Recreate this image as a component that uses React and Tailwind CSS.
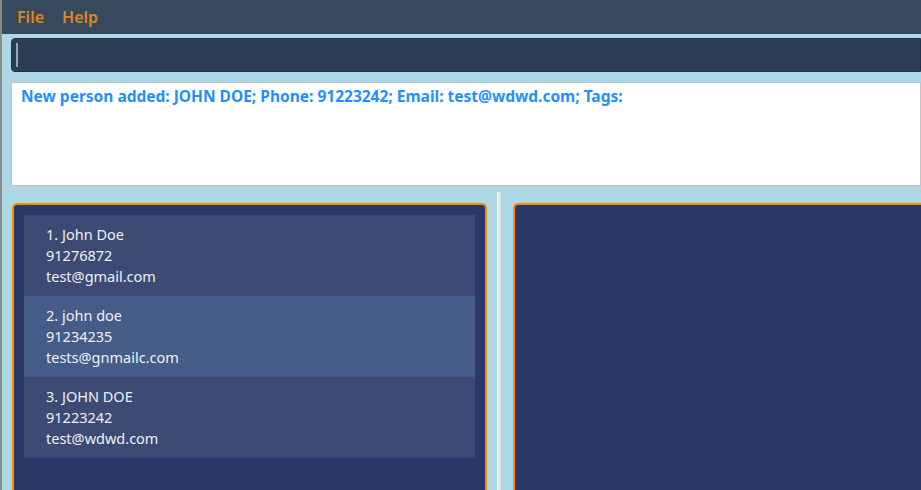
import { useState } from 'react';

const persons = [
  { name: 'John Doe', phone: '91276872', email: 'test@gmail.com' },
  { name: 'john doe', phone: '91234235', email: 'tests@gnmailc.com' },
  { name: 'JOHN DOE', phone: '91223242', email: 'test@wdwd.com' },
];

const font = { fontFamily: '"Noto Sans", "Open Sans", sans-serif' };

export default function App() {
  const [selected] = useState(1);

  return (
    <div className="flex h-[490px] w-[921px] overflow-hidden bg-[#add8e6]" style={font}>
      {/* window edge */}
      <div className="w-[2px] shrink-0 bg-[#8a8a8a]" />

      <div className="flex min-w-0 flex-1 flex-col">
        {/* Menu bar */}
        <div className="flex h-[34px] shrink-0 items-center gap-[18px] bg-[#37495d] pl-[15px] text-[16px] font-semibold text-[#e0861c]">
          <span>File</span>
          <span>Help</span>
        </div>

        {/* Command box */}
        <div className="ml-[9px] mt-[4px] flex h-[34px] shrink-0 items-center rounded-l-[4px] border border-[#22334a] bg-[#2c3e56] pl-[4px]">
          <div className="h-[24px] w-[2px] bg-[#9aa6b4]" />
        </div>

        {/* Result display */}
        <div className="ml-[9px] mt-[10px] h-[104px] shrink-0 border border-[#c4c4c4] bg-white px-[9px] pt-[2px]">
          <p className="whitespace-nowrap text-[15.5px] font-bold text-[#1e90ff]">
            New person added: JOHN DOE; Phone: 91223242; Email: test@wdwd.com; Tags:
          </p>
        </div>

        {/* Split pane */}
        <div className="mt-[5px] flex min-h-0 flex-1 border-t border-[#c8c8c8]">
          <div className="flex w-[493px] shrink-0 pl-[10px] pr-[8px] pt-[11px]">
            <div className="flex-1 rounded-t-[5px] border-2 border-b-0 border-[#ff8a00] bg-[#2c3968] px-[10px] pt-[10px]">
              {persons.map((p, i) => (
                <div
                  key={i}
                  className={`flex h-[81px] flex-col justify-center pl-[22px] text-[14.5px] leading-[21px] text-[#eef0f6] ${
                    i === selected ? 'bg-[#455c88]' : 'bg-[#3c4a74]'
                  }`}
                >
                  <span>{i + 1}. {p.name}</span>
                  <span>{p.phone}</span>
                  <span>{p.email}</span>
                </div>
              ))}
            </div>
          </div>

          {/* Divider */}
          <div className="ml-[2px] w-[4px] shrink-0 bg-gradient-to-r from-[#ffffff] to-[#d6d6d6]" />

          <div className="flex flex-1 pl-[12px] pt-[11px]">
            <div className="flex-1 rounded-tl-[5px] border-l-2 border-t-2 border-[#ff8a00] bg-[#2c3968]" />
          </div>
        </div>
      </div>
    </div>
  );
}
